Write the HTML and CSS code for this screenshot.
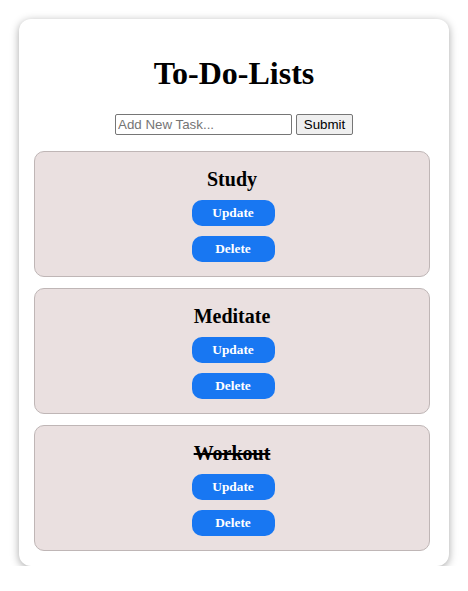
FILE: index.html
```html
<!DOCTYPE html>
<html>
<head>
<meta charset="utf-8">
<title>To-Do-Lists</title>
<link rel="stylesheet" href="styles.css">
</head>
<body>
<div class="app">
  <h1 class="app-title">To-Do-Lists</h1>
  <form class="task-form">
    <input class="task-input" type="text" placeholder="Add New Task...">
    <button class="task-submit" type="button">Submit</button>
  </form>
  <div class="task-list">
    <div class="task">
      <h3 class="task-name">Study</h3>
      <button class="task-btn" type="button">Update</button>
      <button class="task-btn" type="button">Delete</button>
    </div>
    <div class="task">
      <h3 class="task-name">Meditate</h3>
      <button class="task-btn" type="button">Update</button>
      <button class="task-btn" type="button">Delete</button>
    </div>
    <div class="task">
      <h3 class="task-name done">Workout</h3>
      <button class="task-btn" type="button">Update</button>
      <button class="task-btn" type="button">Delete</button>
    </div>
  </div>
</div>
</body>
</html>
```
FILE: styles.css
```css
html, body {
  margin: 0;
  padding: 0;
  background: #ffffff;
}

body {
  font-family: "Liberation Serif", "Times New Roman", serif;
  color: #000;
}

.app {
  width: 430px;
  box-sizing: border-box;
  margin: 19px auto 0;
  padding: 15px 15px 15px;
  background: #fff;
  border-radius: 12px;
  box-shadow: 0 2px 8px rgba(0, 0, 0, 0.35);
}

.app-title {
  margin: 21px 0 22px;
  font-size: 32px;
  font-weight: bold;
  line-height: 37px;
  text-align: center;
}

.task-form {
  display: flex;
  justify-content: center;
  align-items: center;
  gap: 4px;
  height: 20px;
  margin: 0 0 17px;
}

.task-input {
  width: 177px;
  height: 21px;
  box-sizing: border-box;
  margin: 0;
  padding: 1px 2px;
  border: 1px solid #767676;
  border-radius: 2px;
  font-family: "Liberation Sans", Arial, sans-serif;
  font-size: 13.33px;
  color: #000;
  background: #fff;
}

.task-input::placeholder {
  color: #757575;
}

.task-submit {
  width: 57px;
  height: 21px;
  box-sizing: border-box;
  margin: 0;
  padding: 1px 6px;
  border: 1px solid #767676;
  border-radius: 2px;
  background: #efefef;
  font-family: "Liberation Sans", Arial, sans-serif;
  font-size: 13.33px;
  color: #000;
}

.task-list {
  display: flex;
  flex-direction: column;
  gap: 11px;
}

.task {
  width: 396px;
  box-sizing: border-box;
  display: flex;
  flex-direction: column;
  align-items: center;
  gap: 10px;
  padding: 16px 0 14px;
  background: #eae0e0;
  border: 1px solid #bfb6b6;
  border-radius: 10px;
}

.task-name {
  margin: 0;
  font-size: 20px;
  font-weight: bold;
  line-height: 22px;
}

.task-name.done {
  text-decoration: line-through;
}

.task-btn {
  width: 83px;
  height: 26px;
  margin: 0 0 0 2px;
  padding: 0;
  border: none;
  border-radius: 10px;
  background: #1877f2;
  color: #fff;
  font-family: "Liberation Serif", "Times New Roman", serif;
  font-size: 13.33px;
  font-weight: bold;
}
```
